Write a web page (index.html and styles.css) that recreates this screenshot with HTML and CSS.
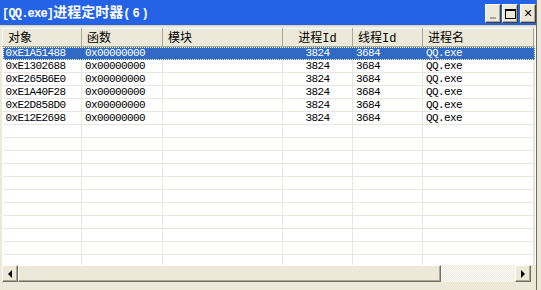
FILE: index.html
```html
<!DOCTYPE html>
<html lang="zh-CN">
<head>
  <meta charset="UTF-8">
  <title>[QQ.exe]进程定时器(6)</title>
  <link rel="stylesheet" href="styles.css">
</head>
<body>
  <div class="screen">
    <div class="window">
      <div class="titlebar">
        <div class="title"><span class="lat">[QQ.exe]</span>进程定时器<span class="lat paren">(6)</span></div>
        <div class="caption-btns">
          <div class="cap-btn min"><span></span></div>
          <div class="cap-btn max"><span></span></div>
          <div class="cap-btn close">&#x2715;</div>
        </div>
      </div>

      <div class="frame">
        <div class="list">
          <table class="grid">
            <colgroup>
              <col style="width:79px">
              <col style="width:81px">
              <col style="width:120px">
              <col style="width:70px">
              <col style="width:70px">
              <col style="width:111px">
              <col>
            </colgroup>
            <thead>
              <tr>
                <th>对象</th>
                <th>函数</th>
                <th>模块</th>
                <th class="center">进程Id</th>
                <th>线程Id</th>
                <th>进程名</th>
                <th class="filler"></th>
              </tr>
            </thead>
            <tbody id="rows">
              <!-- rows are filled by the script -->
            </tbody>
          </table>
        </div>

        <div class="hscroll">
          <div class="sb-btn"><span class="arrow left"></span></div>
          <div class="sb-thumb"></div>
          <div class="sb-track"></div>
          <div class="sb-btn"><span class="arrow right"></span></div>
        </div>
      </div>
    </div>
    <div class="edge"></div>
  </div>

  <script>
    const timers = [
      { obj: '0xE1A51488', fn: '0x00000000', pid: 3824, tid: 3684, name: 'QQ.exe' },
      { obj: '0xE1302688', fn: '0x00000000', pid: 3824, tid: 3684, name: 'QQ.exe' },
      { obj: '0xE265B6E0', fn: '0x00000000', pid: 3824, tid: 3684, name: 'QQ.exe' },
      { obj: '0xE1A40F28', fn: '0x00000000', pid: 3824, tid: 3684, name: 'QQ.exe' },
      { obj: '0xE2D858D0', fn: '0x00000000', pid: 3824, tid: 3684, name: 'QQ.exe' },
      { obj: '0xE12E2698', fn: '0x00000000', pid: 3824, tid: 3684, name: 'QQ.exe' }
    ];
    const tbody = document.getElementById('rows');

    timers.forEach((t, i) => {
      const row = document.createElement('tr');
      if (i === 0) row.className = 'selected';
      row.innerHTML = `
        <td>${t.obj}</td>
        <td>${t.fn}</td>
        <td></td>
        <td class="center">${t.pid}</td>
        <td>${t.tid}</td>
        <td>${t.name}</td>
        <td></td>
      `;
      tbody.appendChild(row);
    });

    // empty lines so the grid runs down to the scrollbar
    for (let i = 0; i < 12; i++) {
      const row = document.createElement('tr');
      row.innerHTML = '<td></td><td></td><td></td><td></td><td></td><td></td><td></td>';
      tbody.appendChild(row);
    }
  </script>
</body>
</html>
```

FILE: styles.css
```css
body {
  margin: 0;
  background-color: #ece9d8;
  font-family: "Liberation Mono", "Noto Sans CJK SC", monospace;
  color: #000;
}
.screen {
  display: flex;
  width: 541px;
  height: 290px;
  overflow: hidden;
}
.window {
  width: 536px;
  display: flex;
  flex-direction: column;
  background-color: #ece9d8;
  border-right: 1px solid #716f64;
}
.edge {
  flex: 1;
  background-color: #ece9d8;
}

/* title bar */
.titlebar {
  height: 25px;
  background-color: #2563e6;
  border-bottom: 1px solid #d6d2c2;
  display: flex;
  align-items: center;
  justify-content: space-between;
}
.title {
  color: #fff;
  font-weight: bold;
  font-size: 14px;
  line-height: 16px;
  padding-left: 2px;
  padding-top: 1px;
  font-family: "Liberation Mono", "Noto Sans CJK SC", monospace;
}
.title .lat {
  font-size: 12px;
  letter-spacing: -0.8px;
}
.title .paren {
  letter-spacing: 2px;
}
.caption-btns {
  display: flex;
  gap: 1px;
  margin-top: 2px;
}
.cap-btn {
  width: 14px;
  height: 17px;
  background-color: #ece9d8;
  border: 1px solid;
  border-color: #fff #404040 #404040 #fff;
  box-shadow: inset -1px -1px #aca899;
  display: flex;
  align-items: center;
  justify-content: center;
  box-sizing: content-box;
}
.cap-btn.close {
  margin-left: 1px;
  font-family: "DejaVu Sans", sans-serif;
  font-weight: bold;
  font-size: 11px;
  line-height: 1;
}
.cap-btn.min span {
  width: 6px;
  height: 2px;
  background-color: #aca899;
  margin-top: 9px;
}
.cap-btn.max span {
  width: 9px;
  height: 7px;
  border: 1px solid #000;
  border-top-width: 2px;
}

/* list view */
.frame {
  flex: 1;
  padding: 2px 0 0 2px;
  display: flex;
  flex-direction: column;
}
.list {
  height: 237px;
  background-color: #fff;
  overflow: hidden;
}
.grid {
  width: 533px;
  border-collapse: collapse;
  table-layout: fixed;
}
.grid th {
  height: 17px;
  padding: 0 0 0 5px;
  font-weight: normal;
  font-size: 12px;
  text-align: left;
  background-color: #ece9d8;
  border-left: 1px solid #fff;
  border-right: 1px solid #aca899;
  border-bottom: 1px solid #aca899;
  box-shadow: inset 0 1px #fff;
  white-space: nowrap;
  overflow: hidden;
}
.grid th.center, .grid td.center {
  text-align: center;
  padding-left: 0;
}
.grid th.filler {
  border-right: none;
}
.grid td {
  height: 12px;
  padding: 0 0 0 3px;
  font-size: 11px;
  letter-spacing: -0.6px;
  line-height: 12px;
  border-right: 1px solid #e8e6de;
  border-bottom: 1px solid #e8e6de;
  white-space: nowrap;
  overflow: hidden;
}
.grid tr.selected td {
  background-color: #316ac5;
  color: #fff;
  border-right-color: #316ac5;
  border-bottom-color: #316ac5;
}
.grid tr.selected {
  outline: 1px dotted #fff;
  outline-offset: -1px;
}

/* horizontal scrollbar */
.hscroll {
  display: flex;
  height: 17px;
  width: 529px;
}
.sb-btn {
  width: 14px;
  height: 15px;
  background-color: #ece9d8;
  border: 1px solid;
  border-color: #fff #716f64 #716f64 #fff;
  box-shadow: inset -1px -1px #aca899;
  display: flex;
  align-items: center;
  justify-content: center;
}
.sb-thumb {
  width: 421px;
  height: 15px;
  background-color: #ece9d8;
  border: 1px solid;
  border-color: #fff #716f64 #716f64 #fff;
  box-shadow: inset -1px -1px #aca899;
}
.sb-track {
  flex: 1;
  background: repeating-conic-gradient(#ece9d8 0 25%, #fff 0 50%) 0 0 / 2px 2px;
}
.arrow {
  width: 0;
  height: 0;
  border-top: 4px solid transparent;
  border-bottom: 4px solid transparent;
}
.arrow.left {
  border-right: 4px solid #000;
}
.arrow.right {
  border-left: 4px solid #000;
}
```
